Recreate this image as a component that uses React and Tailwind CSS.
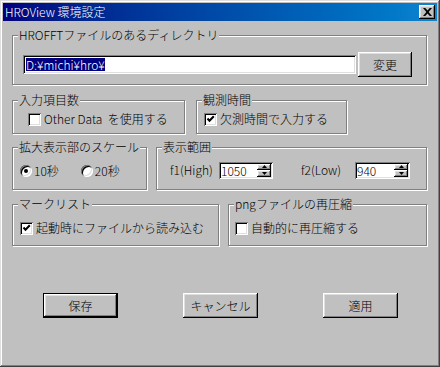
import { useState } from 'react'

const FONT = "font-['Noto_Sans_CJK_JP','Liberation_Sans',sans-serif]"
const RAISED = 'shadow-[inset_-1px_-1px_#000,inset_1px_1px_#fff,inset_-2px_-2px_#808080,inset_2px_2px_#dfdfdf]'
const SUNKEN = 'shadow-[inset_1px_1px_#808080,inset_-1px_-1px_#fff,inset_2px_2px_#000,inset_-2px_-2px_#dfdfdf]'

function Group({ label, className, children }) {
  return (
    <div className={`relative border border-[#808080] shadow-[inset_1px_1px_#fff,1px_1px_#fff] ${className}`}>
      <span className="absolute -top-[9px] left-[5px] bg-[#c0c0c0] px-[1px] text-[12px] leading-[16px] whitespace-nowrap">
        {label}
      </span>
      {children}
    </div>
  )
}

function Checkbox({ checked, label, onToggle }) {
  return (
    <label className="flex items-center gap-[3px] cursor-default" onClick={onToggle}>
      <span className={`w-[13px] h-[13px] bg-white ${SUNKEN} flex items-center justify-center`}>
        {checked && (
          <svg width="9" height="9" viewBox="0 0 9 9">
            <path d="M1.5 3.5 L3.5 5.8 L7.8 1.2" fill="none" stroke="#000" strokeWidth="2" />
          </svg>
        )}
      </span>
      <span className="text-[12px] leading-[16px] whitespace-pre">{label}</span>
    </label>
  )
}

function Radio({ checked, label, onSelect }) {
  return (
    <label className="flex items-center gap-[2px] cursor-default" onClick={onSelect}>
      <span className="w-[12px] h-[12px] rounded-full bg-white shadow-[inset_1px_1px_#808080,inset_-1px_-1px_#fff,inset_2px_2px_#000,inset_-2px_-2px_#dfdfdf] flex items-center justify-center">
        {checked && <span className="w-[4px] h-[4px] rounded-full bg-black" />}
      </span>
      <span className="text-[12px] leading-[16px] whitespace-nowrap">{label}</span>
    </label>
  )
}

function Spin({ value, className }) {
  return (
    <div className={`h-[17px] bg-white ${SUNKEN} flex items-center pl-[2px] pr-[2px] ${className}`}>
      <span className="flex-1 text-[12px] leading-[13px]">{value}</span>
      <div className="flex flex-col w-[14px] h-[13px]">
        <div className={`flex-1 bg-[#c0c0c0] ${RAISED} flex items-center justify-center`}>
          <svg width="5" height="3" viewBox="0 0 5 3"><path d="M2.5 0 L5 3 L0 3 Z" fill="#000" /></svg>
        </div>
        <div className={`flex-1 bg-[#c0c0c0] ${RAISED} flex items-center justify-center`}>
          <svg width="5" height="3" viewBox="0 0 5 3"><path d="M0 0 L5 0 L2.5 3 Z" fill="#000" /></svg>
        </div>
      </div>
    </div>
  )
}

function Button({ children, isDefault }) {
  if (isDefault) {
    return (
      <button className="w-[75px] h-[25px] border border-black bg-[#c0c0c0]">
        <div className={`w-full h-full ${RAISED} flex items-center justify-center text-[12px]`}>{children}</div>
      </button>
    )
  }
  return (
    <button className={`w-[75px] h-[25px] bg-[#c0c0c0] ${RAISED} flex items-center justify-center text-[12px]`}>
      {children}
    </button>
  )
}

export default function App() {
  const [otherData, setOtherData] = useState(false)
  const [missing, setMissing] = useState(true)
  const [scale, setScale] = useState(10)
  const [loadMarks, setLoadMarks] = useState(true)
  const [recompress, setRecompress] = useState(false)

  return (
    <div className={`w-[440px] h-[367px] bg-[#c0c0c0] p-[3px] text-black font-light ${FONT} shadow-[inset_-1px_-1px_#404040,inset_1px_1px_#dfdfdf,inset_-2px_-2px_#808080,inset_2px_2px_#fff] flex flex-col`}>
      {/* title bar */}
      <div className="h-[18px] bg-linear-to-r from-[#000080] to-[#1084d0] flex items-center justify-between pl-[2px] pr-[2px]">
        <span className="text-white text-[12px] leading-[16px]">HROView 環境設定</span>
        <button className={`w-[16px] h-[14px] bg-[#c0c0c0] ${RAISED} flex items-center justify-center`}>
          <svg width="9" height="8" viewBox="0 0 9 8">
            <path d="M0 0 L2.2 0 L4.5 2.6 L6.8 0 L9 0 L5.6 4 L9 8 L6.8 8 L4.5 5.4 L2.2 8 L0 8 L3.4 4 Z" fill="#000" />
          </svg>
        </button>
      </div>

      <div className="flex flex-col pl-[9px]">
        <Group label="HROFFTファイルのあるディレクトリ" className="mt-[14px] w-[415px] h-[50px]">
          <div className="flex items-center gap-[2px] pl-[10px] pt-[16px]">
            <div className={`w-[333px] h-[19px] bg-white ${SUNKEN} flex items-center pl-[3px]`}>
              <span className="bg-[#000080] text-white text-[12px] leading-[13px]">D:¥michi¥hro¥</span>
            </div>
            <button className={`w-[54px] h-[25px] bg-[#c0c0c0] ${RAISED} flex items-center justify-center text-[12px]`}>
              変更
            </button>
          </div>
        </Group>

        <div className="flex mt-[15px] gap-[11px]">
          <Group label="入力項目数" className="w-[173px] h-[34px]">
            <div className="pl-[15px] pt-[10px]">
              <Checkbox checked={otherData} label="Other Data  を使用する" onToggle={() => setOtherData(!otherData)} />
            </div>
          </Group>
          <Group label="観測時間" className="w-[151px] h-[34px]">
            <div className="pl-[7px] pt-[10px]">
              <Checkbox checked={missing} label="欠測時間で入力する" onToggle={() => setMissing(!missing)} />
            </div>
          </Group>
        </div>

        <div className="flex mt-[13px] gap-[9px]">
          <Group label="拡大表示部のスケール" className="w-[135px] h-[43px]">
            <div className="flex items-center gap-[22px] pl-[7px] pt-[15px]">
              <Radio checked={scale === 10} label="10秒" onSelect={() => setScale(10)} />
              <Radio checked={scale === 20} label="20秒" onSelect={() => setScale(20)} />
            </div>
          </Group>
          <Group label="表示範囲" className="w-[271px] h-[43px]">
            <div className="flex items-center pl-[13px] pt-[13px]">
              <span className="text-[12px] w-[49px] whitespace-nowrap">f1(High)</span>
              <Spin value="1050" className="w-[54px]" />
              <span className="text-[12px] ml-[28px] w-[54px] whitespace-nowrap">f2(Low)</span>
              <Spin value="940" className="w-[55px]" />
            </div>
          </Group>
        </div>

        <div className="flex mt-[14px] gap-[9px]">
          <Group label="マークリスト" className="w-[207px] h-[42px]">
            <div className="pl-[7px] pt-[15px]">
              <Checkbox checked={loadMarks} label="起動時にファイルから読み込む" onToggle={() => setLoadMarks(!loadMarks)} />
            </div>
          </Group>
          <Group label="pngファイルの再圧縮" className="w-[199px] h-[42px]">
            <div className="pl-[6px] pt-[15px]">
              <Checkbox checked={recompress} label="自動的に再圧縮する" onToggle={() => setRecompress(!recompress)} />
            </div>
          </Group>
        </div>

        <div className="flex mt-[47px] pl-[31px] gap-[65px]">
          <Button isDefault>保存</Button>
          <Button>キャンセル</Button>
          <Button>適用</Button>
        </div>
      </div>
    </div>
  )
}
